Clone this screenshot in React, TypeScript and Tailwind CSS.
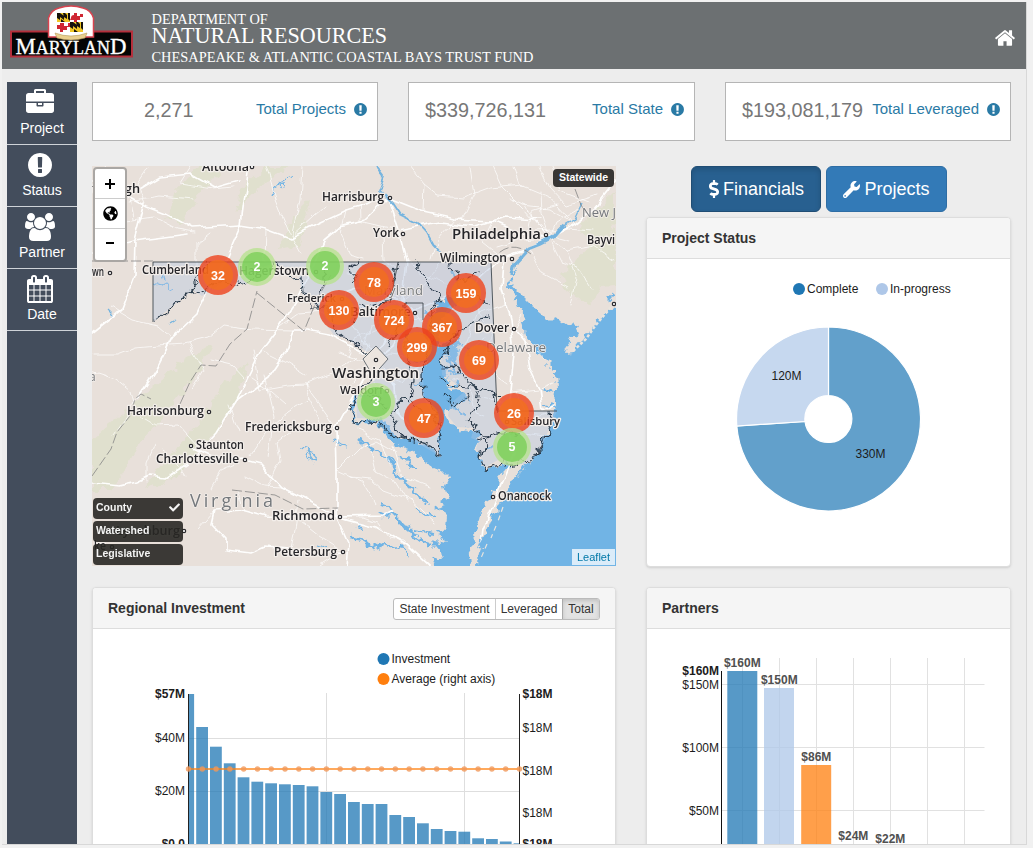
import React from "react";
import { FaCheck, FaDollarSign, FaGlobeAmericas, FaWrench } from "react-icons/fa";

const ICONS = {
  home: { w: 1792, d: "M1472 992v480q0 26-19 45t-45 19h-384v-384h-256v384h-384q-26 0-45-19t-19-45v-480q0-1 .5-3t.5-3l575-474 575 474q1 2 1 6zm223-69l-62 74q-8 9-21 11h-3q-13 0-21-7l-692-577-692 577q-12 8-24 7-13-2-21-11l-62-74q-8-10-7-23.5t11-21.5l719-599q32-26 76-26t76 26l244 204v-195q0-14 9-23t23-9h192q14 0 23 9t9 23v408l219 182q10 8 11 21.5t-7 23.5z" },
  briefcase: { w: 1792, d: "M640 256h512v-128h-512v128zm1152 640v480q0 66-47 113t-113 47h-1472q-66 0-113-47t-47-113v-480h672v160q0 26 19 45t45 19h320q26 0 45-19t19-45v-160h672zm-768 0v128h-256v-128h256zm768-480v384h-1792v-384q0-66 47-113t113-47h352v-160q0-40 28-68t68-28h576q40 0 68 28t28 68v160h352q66 0 113 47t47 113z" },
  alert: { w: 1792, d: "M896 128q209 0 385.5 103t279.5 279.5 103 385.5-103 385.5-279.5 279.5-385.5 103-385.5-103-279.5-279.5-103-385.5 103-385.5 279.5-279.5 385.5-103zm128 1247v-190q0-14-9-23.5t-22-9.5h-192q-13 0-23 10t-10 23v190q0 13 10 23t23 10h192q13 0 22-9.5t9-23.5zm-2-344l18-621q0-12-10-18-10-8-24-8h-220q-14 0-24 8-10 6-10 18l17 621q0 10 10 17.5t24 7.5h185q14 0 23.5-7.5t10.5-17.5z" },
  users: { w: 1920, d: "M593 896q-162 5-265 128h-134q-82 0-138-40.5t-56-118.5q0-353 124-353 6 0 43.5 21t97.5 42.5 119 21.5q67 0 133-23-5 37-5 66 0 139 81 256zm1071 637q0 120-73 189.5t-194 69.5h-874q-121 0-194-69.5t-73-189.5q0-53 3.5-103.5t14-109 26.5-108.5 43-97.5 62-81 85.5-53.5 111.5-20q10 0 43 21.5t73 48 107 48 135 21.5 135-21.5 107-48 73-48 43-21.5q61 0 111.5 20t85.5 53.5 62 81 43 97.5 26.5 108.5 14 109 3.5 103.5zm-1024-1277q0 106-75 181t-181 75-181-75-75-181 75-181 181-75 181 75 75 181zm704 384q0 159-112.5 271.5t-271.5 112.5-271.5-112.5-112.5-271.5 112.5-271.5 271.5-112.5 271.5 112.5 112.5 271.5zm576 225q0 78-56 118.5t-138 40.5h-134q-103-123-265-128 81-117 81-256 0-29-5-66 66 23 133 23 59 0 119-21.5t97.5-42.5 43.5-21q124 0 124 353zm-128-609q0 106-75 181t-181 75-181-75-75-181 75-181 181-75 181 75 75 181z" },
  calendar: { w: 1792, d: "M192 1664h288v-288h-288v288zm352 0h320v-288h-320v288zm-352-352h288v-320h-288v320zm352 0h320v-320h-320v320zm-352-384h288v-288h-288v288zm736 736h320v-288h-320v288zm-384-736h320v-288h-320v288zm768 736h288v-288h-288v288zm-384-352h320v-320h-320v320zm-352-864v-288q0-13-9.5-22.5t-22.5-9.5h-64q-13 0-22.5 9.5t-9.5 22.5v288q0 13 9.5 22.5t22.5 9.5h64q13 0 22.5-9.5t9.5-22.5zm736 864h288v-320h-288v320zm-384-384h320v-288h-320v288zm384 0h288v-288h-288v288zm32-480v-288q0-13-9.5-22.5t-22.5-9.5h-64q-13 0-22.5 9.5t-9.5 22.5v288q0 13 9.5 22.5t22.5 9.5h64q13 0 22.5-9.5t9.5-22.5zm384-64v1280q0 52-38 90t-90 38h-1408q-52 0-90-38t-38-90v-1280q0-52 38-90t90-38h128v-96q0-66 47-113t113-47h64q66 0 113 47t47 113v96h384v-96q0-66 47-113t113-47h64q66 0 113 47t47 113v96h128q52 0 90 38t38 90z" },
};

function Icon({ name, className }: { name: keyof typeof ICONS; className: string }) {
  const icon = ICONS[name];
  return (
    <svg viewBox={`0 0 ${icon.w} 1792`} className={className} fill="currentColor" aria-hidden="true">
      <path d={icon.d} />
    </svg>
  );
}

function Logo() {
  return (
    <svg viewBox="0 0 124 56" className="h-[56px] w-[124px]">
      <rect x="1" y="26.500" width="121" height="25" fill="#050505" stroke="#b5303c" strokeWidth="2" />
      <path d="M38.500 32V13Q41 5 49 3Q61 -1 73 3Q81 5 83.500 13V32Z" fill="#fff" stroke="#d8434f" strokeWidth="1.500" />
      <g transform="translate(47 8)">
        <rect width="13" height="9" fill="#f0c726" />
        <path d="M0 0h3l4 3v4L3 4v3L0 5zM6 0h2l2 2v4L7 4zM11 0h2v8l-2-2zM4 6l4 3H4z" fill="#17130c" />
        <rect x="13" width="13" height="9" fill="#fff" />
        <path d="M14 5q0-3 3-3V0h3v3h3V1h3v3h-3v3h-3v2h-3V7h-4z" fill="#cf2633" />
        <rect y="9" width="13" height="10" fill="#fff" />
        <path d="M0 12h3v-2h4v3h4v-3h2v4h-3v3H6v2H3v-3H0z" fill="#cf2633" />
        <rect x="13" y="9" width="13" height="10" fill="#f0c726" />
        <path d="M13 9h3l4 3v4l-4-3v3l-3-2zM19 9h2l2 2v4l-3-2zM24 9h2v8l-2-2zM17 16l4 3h-4z" fill="#17130c" />
      </g>
      <path d="M45 28q16 6 32 0l-2 5q-14 4-28 0z" fill="#e9cf8e" stroke="#b49a5c" strokeWidth=".6" />
      <text x="5.500" y="49" fontFamily="Liberation Serif, serif" fill="#fff" stroke="#fff" strokeWidth=".35" fontSize="24" textLength="111" lengthAdjust="spacingAndGlyphs">M<tspan fontSize="19">ARYLAN</tspan>D</text>
    </svg>
  );
}

const NAV = [
  { icon: "briefcase" as const, label: "Project", cls: "h-7 w-7" },
  { icon: "alert" as const, label: "Status", cls: "h-7 w-7" },
  { icon: "users" as const, label: "Partner", cls: "h-7 w-[30px]" },
  { icon: "calendar" as const, label: "Date", cls: "h-7 w-7" },
];

const STATS = [
  { value: "2,271", label: "Total Projects", pad: "pl-[51px]" },
  { value: "$339,726,131", label: "Total State", pad: "pl-4" },
  { value: "$193,081,179", label: "Total Leveraged", pad: "pl-4" },
];

const LAND =
  "M80 150H630V302L606 313 598 321 590 332 581 344 573 353 565 354 567 347 574 336 578 329 574 322 567 324 557 317 549 321 541 313 532 306 524 298 517 291 512 285 510 280 517 270 513 272 509 279 508 286 514 295 518 304 524 312 523 324 525 335 532 345 537 353 547 363 555 371 556 391 555 408 553 421 546 437 537 453 528 464 521 474 513 480 507 492 500 505 493 512 488 526 483 537 477 553 475 580H471L469 553 475 543 474 531 479 522 480 514 487 508 486 503 493 498 492 491 498 486 499 478 505 471 510 463 500 467 489 469 481 468 483 458 476 450 480 443 475 436 483 434 478 428 471 433 466 427 463 433 458 424 451 423 446 417 445 410 453 410 455 403 466 402 468 397 460 393 457 389 448 391 445 384 453 380 444 376 447 370 441 362 447 353 455 365 460 357 454 346 462 345 457 337 451 343 445 339 440 347 438 338 445 333 440 323 447 313 456 304 462 298 454 300 448 295 442 302 435 300 438 308 430 315 434 326 427 333 430 342 425 353 427 363 423 371 422 382 425 395 430 404 434 414 439 426 438 435 441 449 440 457 431 451 427 445 419 444 411 438 402 439 393 434 389 425 381 417 374 419 367 422 358 421 353 412 356 400 362 395 355 395 350 409 354 420 364 425 377 422 383 431 390 441 400 447 411 451 422 460 432 467 443 472 448 477 444 486 447 496 440 500 446 505 434 508 447 516 446 526 448 533 437 532 444 543 431 540 440 551 442 560 432 557 440 580H80Z";

const LABELS: [string, number, number, number, string?][] = [
  ["Altoona", 202, 171, 47], ["Harrisburg", 322, 201, 62], ["York", 373, 237, 26],
  ["Philadelphia", 452, 239, 89, "lg"], ["Wilmington", 440, 262, 67], ["Bayvi", 587, 244, 28],
  ["Cumberland", 142, 274, 67], ["Hagerstown", 239, 275, 70], ["Frederick", 287, 302, 49, "sm"],
  ["Baltimore", 350, 316, 61], ["Dover", 475, 332, 34], ["Washington", 332, 378, 87, "lg"],
  ["Waldorf", 340, 394, 43, "sm"], ["Harrisonburg", 127, 415, 77], ["Staunton", 196, 449, 48],
  ["Charlottesville", 156, 463, 83], ["Fredericksburg", 245, 431, 87], ["Richmond", 272, 520, 63],
  ["Petersburg", 274, 556, 63], ["Salisbury", 511, 425, 49, "sm"], ["Onancock", 498, 500, 53],
  ["wn", 92, 276, 12], ["tsburgh", 92, 193, 48], ["Lynchburg", 116, 535, 64], ["ke", 94, 550, 12],
];
const TOWNS = [[252, 166], [390, 197], [403, 233], [546, 234], [512, 258], [614, 303], [110, 272], [415, 312], [376, 359], [514, 328], [387, 390], [209, 411], [191, 445], [245, 459], [337, 427], [340, 516], [343, 551], [493, 496], [184, 530], [316, 271], [342, 298], [112, 546], [507, 421]];

const CLUSTERS = [
  [218, 275, 32], [374, 282, 78], [466, 293, 159], [339, 310, 130], [394, 320, 724],
  [442, 327, 367], [417, 347, 299], [479, 360, 69], [424, 418, 47], [514, 413, 26],
];
const SMALL = [[257, 267, 2], [325, 266, 2], [376, 402, 3], [512, 447, 5]];

const HIGHWAYS = [
  "M249 166L241 225 226 260 211 285 196 315 172 338 156 370 138 398 M241 225L266 229 290 238 318 224 346 211 388 198 M388 198L365 220 341 226 323 241 313 266 298 298 278 328 261 350 250 373 237 400 216 433 188 463 166 478 150 476 137 482 120 486 92 483",
  "M92 180L128 196 148 207 166 214 191 228 241 225 M128 196L160 177 191 174 214 187 238 180 M145 203L135 240 134 276 121 310 92 333 M92 252L134 241 188 234",
  "M388 198L423 212 455 219 492 221 527 236 549 238 574 224 594 208 616 180 M388 198L398 230 406 259 402 300 396 322 M549 238L526 249 502 258 474 284 440 300 412 312 394 326 376 355 352 398 336 427 337 471 337 516 349 543 347 566",
  "M337 516L307 500 282 487 260 463 245 459 221 461 190 447 M337 516L376 527 408 546 430 566 M337 516L383 515 394 509 M337 516L300 517 266 516 241 509 214 511 211 524 226 540 226 550 251 553 265 547 291 549 318 553 343 552",
  "M376 359L350 345 329 334 307 330 292 330 M376 359L394 345 401 332 M292 330L287 350 268 378 238 400 M398 230L440 222 474 226 506 217 539 219 M413 311L374 284 345 294 M376 359L395 385 397 412 412 431",
  "M504 260L502 289 510 320 514 353 510 391 507 426 514 453 505 475 493 505 483 529 478 566 M514 328L526 342 530 369 539 388 542 411 554 405",
];
const ROADS = [
  "M92 214L119 222 153 217 176 229 194 232 M105 166L116 184 130 196 134 219 M128 201L160 196 193 199 M148 168L138 183 146 203 M191 166L180 183 211 188 235 186 M211 232L197 243 197 268 M266 166L276 200 291 237 300 253 M302 166L300 200 291 237 M290 238L325 206 M266 229L265 261 287 272",
  "M92 355L118 355 136 348 157 346 184 344 208 338 224 325 253 329 291 330 M92 371L116 379 131 391 137 414 155 425 178 424 198 446 M110 307L132 320 158 326 172 338 M113 435L126 417 137 398 M189 344L204 370 191 391 M211 360L232 365 244 378 M278 328L299 313 325 311 M253 350L259 390 287 385 305 384 309 400 288 413 265 433 250 455",
  "M261 350L287 363 306 375 M305 384L330 375 356 357 M305 384L336 427 M309 400L320 420 337 430 M251 378L270 391 285 404 M229 405L239 433 M264 375L274 417 268 458 M267 488L281 460 278 442 292 431 M245 477L263 486 282 487 M212 488L221 471 235 465 M185 475L174 459 163 451 M147 482L147 463 155 444",
  "M337 471L359 449 376 441 396 452 M337 471L362 482 377 505 M350 477L371 479 383 490 411 500 435 522 M371 451L376 472 394 481 407 502 M358 430L380 439 388 464 M392 445L401 475 430 486 M363 517L377 522 389 538 404 541 417 556 M343 551L319 536 300 521 M343 551L320 566 M214 511L197 530 M244 510L238 490 M299 500L295 530 291 549",
  "M410 166L424 184 439 196 463 198 490 188 523 185 M470 166L474 196 462 220 M492 166L502 188 523 209 549 238 M514 166L520 184 549 196 567 216 574 224 M540 166L550 188 566 205 598 195 M423 212L424 185 M455 219L438 239 432 260 M492 221L482 242 502 258 M527 236L532 212 558 204 M549 238L567 251 594 246 616 260 M549 238L561 262 579 268 592 288 M567 251L577 278 571 306 M523 206L550 209 574 224 M529 247L542 273 568 287 M553 166L560 191 589 202",
  "M346 211L341 233 350 256 364 260 M359 193L360 221 398 230 M382 235L383 261 399 271 M406 259L425 275 446 284 M402 300L421 288 436 270 450 251 M402 300L383 286 365 273 347 272 M402 300L387 309 359 307 339 302 M413 311L402 328 416 350 M401 332L384 339 376 359 M387 309L378 329 354 339 347 356 M413 311L430 331 446 349 462 353 M431 362L414 369 402 383 M367 344L366 367 352 382 M376 359L391 352 412 355 M376 359L382 376 401 382 M345 294L343 312 356 331 376 359",
  "M474 284L478 313 466 342 453 361 M478 313L493 330 514 328 M478 313L505 303 M493 330L482 366 507 384 M514 328L522 314 M526 342L544 360 M511 392L538 389 552 383 M482 397L501 401 M500 406L511 431 551 437 M468 380L475 413 484 416 M516 392L530 420 549 414 M444 382L460 377 M470 350L484 339",
  "M549 238L535 222 526 206 508 198 M549 238L541 214 540 190 M549 238L520 240 497 247 M549 238L556 222 578 209 M535 231L566 229 593 231 M540 226L559 238 571 241 M376 359L365 343 370 326 390 320 M376 359L358 360 340 352 M376 359L372 380 383 398 M402 318L425 319 M402 318L410 335 406 352 M402 318L386 322 372 316",
];

const MARYLAND =
  "M153 262H491L497 411H557L547 434 539 454 529 463 506 466 498 460 484 468 481 457 476 449 478 441 471 438 474 428 457 427 448 416 450 404 465 391 455 383 442 375 441 360 447 345 441 328 447 308 460 295 442 299 430 317 427 351 423 374 424 398 438 425 440 456 412 440 393 435 376 419 357 418 356 395 374 381 384 361 376 348 367 352 346 338 334 335 321 318 319 308 302 293 299 276 275 263 254 270 246 284 224 282 202 296 193 290 169 309 153 322Z";
const COUNTIES = [
  "M153 322L169 309 193 290 202 296 208 286 224 282 246 286 257 272 277 264 291 277 302 276 303 291 313 302 313 308 331 308",
  "M192 290L208 262 M327 262L318 308 M359 262L351 268 354 282 M398 262L390 301 377 302 361 307 M418 262L422 276 434 289 439 300 M450 262L461 281 481 273 M490 303L473 298 M490 317L472 320 463 332 449 338 447 350",
  "M331 308L333 328 345 338 361 348 368 356 M376 374L359 394 M363 310L351 324 M387 348L402 320 M405 321V303 M407 333L407 357 413 379 411 401 424 412 M411 401L400 400 391 413 397 431 409 440 428 443 438 457",
  "M438 300L430 315 434 330 427 352 423 373 424 395 434 413 441 439 440 456 427 445 412 440 390 434",
  "M447 350L440 361 445 369 455 364 462 376 477 389 495 392 497 411 M440 376L449 384 468 386 477 389 M480 389L476 407 466 421 M466 421L478 430 485 437 506 431 520 436 M476 438L487 440 481 457 484 469 503 465 M550 411L551 425 547 435 541 441 536 456",
  "M551 413L545 441 532 460 505 466 M481 389L491 391 497 397 M357 392L378 397 386 412 M359 394L350 409 356 421 365 423 380 424 391 436 M445 395L451 404 464 401 470 391",
];

function StateMap() {
  return (
    <svg viewBox="92 166 524 400" className="block h-[400px] w-[524px]">
      <defs>
        <filter id="coast" filterUnits="userSpaceOnUse" x="80" y="150" width="560" height="430">
          <feTurbulence type="fractalNoise" baseFrequency=".11" numOctaves="3" seed="7" />
          <feDisplacementMap in="SourceGraphic" scale="12" xChannelSelector="R" yChannelSelector="G" />
        </filter>
        <filter id="wobble" filterUnits="userSpaceOnUse" x="80" y="150" width="560" height="430">
          <feTurbulence type="fractalNoise" baseFrequency=".06" numOctaves="2" seed="3" />
          <feDisplacementMap in="SourceGraphic" scale="8" xChannelSelector="R" yChannelSelector="G" />
        </filter>
        <clipPath id="land-area"><path d={LAND} /></clipPath>
      </defs>
      <rect x="92" y="166" width="524" height="400" fill="#71b4e5" />
      <g filter="url(#coast)">
        <path d={LAND} fill="#e8e0da" />
        <g fill="#dde0c8" opacity=".65">
          <path d="M92 440L139 399 184 360 211 344 205 365 169 409 139 445 113 490H92Z" />
          <path d="M169 456L202 419 227 380 248 362 240 397 211 438 176 477 145 490Z" />
          <path d="M199 166L176 191 166 219 182 224 201 192 225 166ZM236 213L258 189 289 166H266L239 192ZM276 250L297 214 310 200 301 246Z" />
          <path d="M562 275L589 246 616 228V286L602 287 588 306 567 290ZM580 224L616 190V224L593 249Z" />
        </g>
        <g fill="none" stroke="#71b4e5">
          <path d="M358 438L371 449 380 454 391 461 397 475 410 486 421 498 430 506 M377 511l7 5 9-1 9 9 8 5 9 12 13 4M352 538l11 2 8 8 9-4 10 4 12-1 6 12" strokeWidth="2.500" />
          <path d="M440 322l-15-11M434 339l-14-4M425 363l-10-3M424 383l-10 2M455 430l4 14M465 446l4 3M468 462l2 8M525 466l-7 9M534 460l-7 5M608 300l5-6M554 394l-11-5M557 407l-14-3M447 349l13 5M446 361l9-6M447 374l12-2M448 388l12-5M380 504l12 5M415 510l20 5M414 530l18 3M400 456l17 11M483 450l9-3M454 409l11 4M540 445l8-14" strokeWidth="2.200" />
          <path d="M346 445l-12-4M365 530l-9-5M155 284l7 3 6-3 3 6 4-2M162 271l2 9M272 194l3-6 5-3 4-6 7-3M297 448l10 1 9 11-8-1-3-5" strokeWidth="1.300" />
          <path d="M445 350l8 8-5 7 9 8M463 345l5 8" strokeWidth="2" />
        </g>
      </g>
      <g fill="none" stroke="#fff" strokeLinejoin="round" strokeLinecap="round" filter="url(#wobble)">
        <g clipPath="url(#land-area)">
          {ROADS.map((d) => <path key={d} d={d} strokeWidth=".9" opacity=".78" />)}
          {HIGHWAYS.map((d) => <path key={d} d={d} strokeWidth="1.700" opacity=".95" />)}
        </g>
      </g>
      <g fill="none" stroke="#75b4df" strokeWidth="1.300" filter="url(#wobble)">
        <path d="M376 166L384 177 379 191 391 202 399 214 417 223 426 233 432 244 443 256" strokeWidth="1.800" />
        <path d="M451 270l8 16 5 9" strokeWidth="1.800" />
        <path d="M512 276L515 262 527 249 540 244 553 237 563 226" strokeWidth="3.500" />
        <path d="M563 226l12-7 7-15M106 310l6 6M169 324l6-4M315 461L308 450M317 545l9 3" />
      </g>
      <g fill="none" stroke="#e9e4de" strokeWidth="1.200"><path d="M503 507l-5 14M496 526l-5 12M487 544l-6 14" strokeDasharray="5 4" /><path d="M573 351l13-12 9-13 16-19" strokeWidth="2.500" strokeDasharray="3 2" /></g>
      <path d={MARYLAND} fill="#aec5e2" fillOpacity=".36" />
      <path d="M372 262V303L405 319 440 300 491 303V262Z" fill="#adb5c0" fillOpacity=".1" />
      <g fill="none" stroke="#263747" strokeWidth="1.100" strokeLinejoin="round" filter="url(#coast)">{COUNTIES.map((d) => <path key={d} d={d} />)}</g>
      <path d="M153 322V262H491L497 411H557M398 262L390 303M405 319V303H423V320" fill="none" stroke="#40484f" strokeWidth=".9" />
      <path d="M363 359l13-13 12 13-15 17z" fill="#ece5df" stroke="#35414a" strokeWidth=".7" />
      <g fill="none" stroke="#858585" strokeWidth=".8" strokeDasharray="10 3">
        <path d="M92 261H153M92 476L111 449 117 432 130 416 135 399 141 394 151 399M180 404L190 382 201 365 216 366 230 344 247 329 257 291M257 293L304 331 318 297 331 275" />
        <path d="M491 262Q508 237 531 254M575 189L581 205 586 213M232 490l43 5 28 14 35-1" />
      </g>
      <g fontFamily="Open Sans, Noto Sans, sans-serif" paintOrder="stroke" stroke="#f3eeea" strokeWidth="2.500" strokeLinejoin="round">
        {LABELS.map(([text, x, y, width, size]) => (
          <text key={text} x={x} y={y} textLength={width} lengthAdjust="spacingAndGlyphs" className={size === "lg" ? "text-[15px]" : size === "sm" ? "text-[11px]" : "text-[12px]"} fontWeight="600" fill="#252529">{text}</text>
        ))}
        <g fill="#74787c" strokeWidth="1.500">
          <text x="190" y="507" fontSize="18" textLength="83">Virginia</text>
          <text x="364" y="295" fontSize="13" textLength="59">Maryland</text>
          <text x="486" y="352" fontSize="13.500" textLength="60">Delaware</text>
          <text x="582" y="217" fontSize="13">New J</text>
          <text x="89" y="381" fontSize="12">a</text>
        </g>
      </g>
      <g fill="#fff" stroke="#29292d" strokeWidth="1.200">{TOWNS.map(([x, y]) => <circle key={`${x}-${y}`} cx={x} cy={y + 1} r="1.700" />)}</g>
      <g fontFamily="Liberation Sans, sans-serif" fontSize="12.500" fontWeight="700" fill="#fff" textAnchor="middle">
        {CLUSTERS.map(([x, y, n]) => (
          <g key={n}>
            <circle cx={x} cy={y} r="20" fill="#ee421c" fillOpacity=".8" />
            <circle cx={x} cy={y} r="15" fill="#f3721c" fillOpacity=".72" />
            <text x={x} y={y + 4.5}>{n}</text>
          </g>
        ))}
        {SMALL.map(([x, y, n]) => (
          <g key={`${x}-${n}`}>
            <circle cx={x} cy={y} r="19" fill="#b5e28c" fillOpacity=".75" />
            <circle cx={x} cy={y} r="15" fill="#6ecc4b" fillOpacity=".68" />
            <text x={x} y={y + 4}>{n}</text>
          </g>
        ))}
      </g>
    </svg>
  );
}

function MapPanel() {
  return (
    <div className="relative h-[400px] w-[524px] overflow-hidden">
      <StateMap />
      <div className="absolute left-px top-px flex h-[95px] w-[34px] flex-col rounded border-2 border-[#aaa7a4] bg-white text-black">
        <div className="flex h-[30px] shrink-0 items-center justify-center border-b border-[#ccc]"><svg viewBox="0 0 10 10" className="h-2.5 w-2.5"><path d="M5 0v10M0 5h10" stroke="currentColor" strokeWidth="2" /></svg></div>
        <div className="flex h-[30px] shrink-0 items-center justify-center border-b border-[#ccc]"><FaGlobeAmericas className="h-[15px] w-[15px]" /></div>
        <div className="flex h-[28px] items-center justify-center"><svg viewBox="0 0 8 2" className="h-0.5 w-2"><path d="M0 1h8" stroke="currentColor" strokeWidth="2" /></svg></div>
      </div>
      <div className="absolute right-[2px] top-[3px] flex h-[18px] w-[61px] items-center justify-center rounded-sm bg-[#383634] text-[10.5px] font-bold text-white">Statewide</div>
      <div className="absolute bottom-px left-px flex w-[90px] flex-col gap-0.5 text-[10.5px] font-bold text-[#f4f4f4]">
        <div className="flex h-[21px] items-center justify-between rounded-sm bg-[#282724]/90 px-[3px] pb-0.5">County<FaCheck className="h-[11px] w-[11px]" /></div>
        <div className="flex h-[21px] items-center rounded-sm bg-[#282724]/90 px-[3px] pb-0.5">Watershed</div>
        <div className="flex h-[21px] items-center rounded-sm bg-[#282724]/90 px-[3px] pb-0.5">Legislative</div>
      </div>
      <div className="absolute bottom-px right-px flex h-4 w-[43px] items-center justify-center bg-white/75 text-[11px] text-[#0078a8]">Leaflet</div>
    </div>
  );
}

function Panel({ title, children, actions, className }: { title: string; children: React.ReactNode; actions?: React.ReactNode; className: string }) {
  return (
    <section className={`flex flex-col overflow-hidden rounded border border-[#dddddd] bg-white shadow-sm ${className}`}>
      <div className="flex h-[41px] shrink-0 items-center justify-between border-b border-[#ddd] bg-[#f5f5f5] px-[15px]">
        <h3 className="text-sm font-bold text-[#333]">{title}</h3>
        {actions}
      </div>
      {children}
    </section>
  );
}

function Donut() {
  return (
    <svg viewBox="647 259 363 307" className="block h-[307px] w-[363px]" fontFamily="Liberation Sans, sans-serif" fontSize="12" fill="#1c1c1c">
      <circle cx="799" cy="289" r="6" fill="#1f77b4" /><text x="807" y="293">Complete</text>
      <circle cx="882" cy="289" r="6" fill="#aec7e8" /><text x="890" y="293">In-progress</text>
      <g stroke="#fff" strokeWidth="1.200">
        <path d="M828.500 327A92 92 0 1 1 736.800 426L805 421.500A23.500 23.500 0 1 0 828.500 395.500Z" fill="#62a0cb" />
        <path d="M828.500 327A92 92 0 0 0 736.800 426L805 421.500A23.500 23.500 0 0 1 828.500 395.500Z" fill="#c6d8ef" />
      </g>
      <text x="786.500" y="380" textAnchor="middle">120M</text>
      <text x="870.500" y="458" textAnchor="middle">330M</text>
    </svg>
  );
}

const TOPS = [694, 727, 746.7, 763.3, 777.3, 781.7, 783.3, 784.3, 785, 786.3, 792, 794, 802, 804, 804, 815, 817, 823.3, 829, 831, 831.7, 838.3, 839, 841.5, 843.3];

function InvestmentChart() {
  return (
    <svg viewBox="93 629 522 230" className="block h-[230px] w-[522px] shrink-0" fontFamily="Liberation Sans, sans-serif" fontSize="12" fill="#1c1c1c">
      <g stroke="#dedede"><path d="M189 738.500H519M189 791.500H519M326.500 693V859M464.500 693V859" /></g>
      <circle cx="383.500" cy="659" r="6" fill="#1f77b4" /><text x="391.500" y="663">Investment</text>
      <circle cx="383.500" cy="679" r="6" fill="#ff7f0e" /><text x="391.500" y="683">Average (right axis)</text>
      {TOPS.map((top, i) => {
        const x = i === 0 ? 188.5 : 182.4 + i * 13.8;
        return <rect key={i} x={x} y={top} width={i === 0 ? 5.6 : i === 24 ? 5.9 : 11.8} height={859 - top} fill="#1f77b4" fillOpacity=".75" />;
      })}
      <path d="M188.500 694V859M519.500 694V859" stroke="#222" />
      <path d="M188.500 769H519.500" stroke="#ff7f0e" strokeWidth="1.600" strokeOpacity=".9" />
      {TOPS.map((_, i) => <circle key={i} cx={188.5 + i * 13.79} cy="769" r="2.700" fill="#f1995a" fillOpacity=".8" />)}
      <g textAnchor="end"><text x="185" y="698" fontWeight="700">$57M</text><text x="185" y="742">$40M</text><text x="185" y="795">$20M</text><text x="185" y="847.500" fontWeight="700">$0.0</text></g>
      <text x="522.500" y="698" fontWeight="700">$18M</text><text x="522.500" y="732">$18M</text><text x="522.500" y="775">$18M</text><text x="522.500" y="817">$18M</text><text x="522.500" y="847.500" fontWeight="700">$18M</text>
    </svg>
  );
}

function PartnersChart() {
  return (
    <svg viewBox="647 629 363 230" className="block h-[230px] w-[363px] shrink-0" fontFamily="Liberation Sans, sans-serif" fontSize="12" fill="#1c1c1c">
      <path d="M722 684.500H984.500M722 747.500H984.500M722 810.500H984.500M742.500 658V859M779.500 658V859M816.500 658V859M853.500 658V859M890.500 658V859M927.500 658V859M964.500 658V859" stroke="#e1e1e1" fill="none" />
      <g fillOpacity=".75"><rect x="727.300" y="671" width="30" height="188" fill="#1f77b4" /><rect x="764" y="688" width="30" height="171" fill="#aec7e8" /><rect x="801.200" y="765" width="30" height="94" fill="#ff7f0e" /></g>
      <path d="M721.500 671V859" stroke="#111" />
      <g textAnchor="end"><text x="719" y="675" fontWeight="700">$160M</text><text x="719" y="689">$150M</text><text x="719" y="752">$100M</text><text x="719" y="815">$50M</text></g>
      <g textAnchor="middle" fontWeight="700" fill="#505050"><text x="742.300" y="667">$160M</text><text x="779.300" y="684">$150M</text><text x="816.300" y="761">$86M</text><text x="853.300" y="840">$24M</text><text x="890.300" y="843">$22M</text></g>
    </svg>
  );
}

export default function App() {
  return (
    <div className="h-[848px] w-[1033px] overflow-hidden bg-[#f1f1f1] pl-[2px] pt-[2px] font-['Liberation_Sans',sans-serif]">
      <div className="flex h-[843px] w-[1025px] flex-col overflow-hidden border-b border-r border-[#d8d8d8] bg-[#ededed]">
        <header className="flex h-[67px] shrink-0 items-center justify-between bg-[#6c7072] pl-[8px] pr-[9px] text-white">
          <div className="flex h-full items-start">
            <div className="pt-[3px]"><Logo /></div>
            <div className="flex flex-col whitespace-nowrap pl-[17.5px] pt-[10px] font-['Liberation_Serif',serif]">
              <span className="text-[14.4px] leading-[14px]">DEPARTMENT OF</span>
              <span className="text-[22.1px] leading-[20px]">NATURAL RESOURCES</span>
              <span className="pt-[3px] text-[14.4px] leading-[16px]">CHESAPEAKE &amp; ATLANTIC COASTAL BAYS TRUST FUND</span>
            </div>
          </div>
          <Icon name="home" className="mr-px mt-1 h-[22px] w-[22px]" />
        </header>
        <div className="flex min-h-0 flex-1 pt-[13px]">
          <nav className="ml-[5px] w-[70px] shrink-0 bg-[#434d5c] pt-px text-white">
            {NAV.map((item) => (
              <div key={item.label} className="flex h-[62px] flex-col items-center border-b border-[#cfd3d8] pt-[6px]">
                <div className="mr-1"><Icon name={item.icon} className={item.cls} /></div>
                <span className="mt-px text-sm leading-5">{item.label}</span>
              </div>
            ))}
          </nav>
          <main className="flex w-[949px] shrink-0 flex-col pl-[15px]">
            <div className="grid w-[919px] grid-cols-[286px_287px_286px] gap-[30px]">
              {STATS.map((s) => (
                <div key={s.label} className={`flex h-[59px] justify-between border border-[#b5b5b5] bg-white pr-[9px] ${s.pad}`}>
                  <span className="pt-[13px] text-[19.8px] text-[#777]">{s.value}</span>
                  <span className="flex h-[52px] items-center text-[15px] text-[#2a7aa5]">{s.label}<Icon name="alert" className="ml-[7px] h-[15px] w-[15px]" /></span>
                </div>
              ))}
            </div>
            <div className="mt-[25px] grid w-[919px] grid-cols-[524px_365px] gap-x-[30px]">
              <MapPanel />
              <div className="flex flex-col">
                <div className="ml-[45px] flex gap-[5px] text-[18px] text-white">
                  <button className="flex h-[46px] w-[130px] items-center justify-center gap-[3px] rounded-md border border-[#204d74] bg-[#286090] shadow-[inset_0_3px_5px_rgba(0,0,0,0.125)]"><FaDollarSign className="h-[18px] w-[12px]" />Financials</button>
                  <button className="flex h-[46px] w-[121px] items-center justify-center gap-1 rounded-md border border-[#2e6da4] bg-[#337ab7]"><FaWrench className="h-[17px] w-[17px]" />Projects</button>
                </div>
                <Panel title="Project Status" className="mt-[5px] h-[350px] w-[365px]"><Donut /></Panel>
              </div>
            </div>
            <div className="mt-5 grid w-[919px] grid-cols-[524px_365px] gap-x-[30px]">
              <Panel title="Regional Investment" className="h-[350px] w-[524px]" actions={
                <div className="mt-px flex h-[22px] items-stretch overflow-hidden rounded-[3px] border border-[#bbb] bg-white text-xs text-[#333]">
                  <span className="flex w-[102px] items-center justify-center border-r border-[#ccc]">State Investment</span>
                  <span className="flex w-[67px] items-center justify-center border-r border-[#aaa]">Leveraged</span>
                  <span className="flex w-[36px] items-center justify-center bg-[#e2e2e2] shadow-[inset_0_2px_4px_rgba(0,0,0,0.15)]">Total</span>
                </div>
              }><InvestmentChart /></Panel>
              <Panel title="Partners" className="h-[350px] w-[365px]"><PartnersChart /></Panel>
            </div>
          </main>
        </div>
      </div>
    </div>
  );
}
